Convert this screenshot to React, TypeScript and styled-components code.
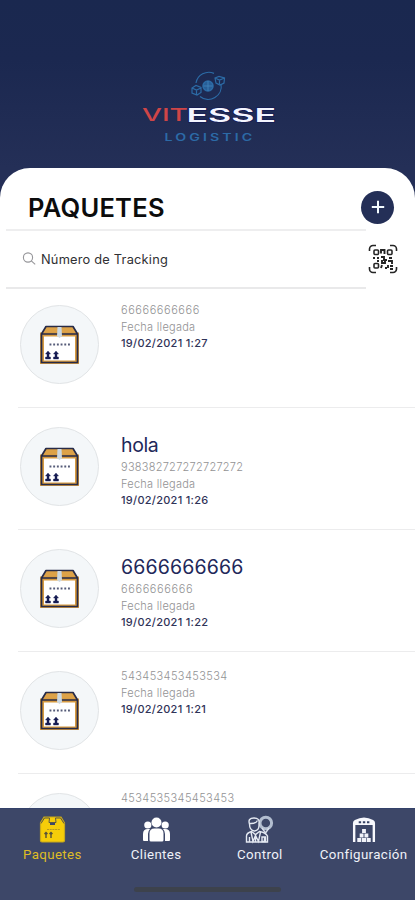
import React from "react";
import styled, { createGlobalStyle } from "styled-components";

const GlobalStyle = createGlobalStyle`
  *, *::before, *::after { box-sizing: border-box; }
  body { margin: 0; background: #232f57; font-family: Inter, "Liberation Sans", sans-serif; }
`;

const Screen = styled.div`
  width: 415px;
  height: 900px;
  display: flex;
  flex-direction: column;
  overflow: hidden;
  background: linear-gradient(#1a284f 0, #1b2850 60px, #242f57 168px, #242f57 100%);
`;

const Brand = styled.header`
  flex: 0 0 168px;
  display: flex;
  justify-content: center;
  align-items: flex-start;
  padding-top: 66px;
`;

const Sheet = styled.main`
  flex: 1 1 0;
  min-height: 0;
  display: flex;
  flex-direction: column;
  overflow: hidden;
  background: #fff;
  border-radius: 30px 30px 0 0;
`;

const TitleBar = styled.div`
  flex: 0 0 61px;
  display: flex;
  align-items: center;
  justify-content: space-between;
  padding: 17px 21px 0 28px;
`;

const Title = styled.h1`
  margin: 1px 0 0;
  font-size: 25.5px;
  line-height: 32px;
  font-weight: 600;
  letter-spacing: 0.25px;
  color: #0c0c0c;
`;

const AddButton = styled.button`
  width: 33px;
  height: 33px;
  margin-top: 0;
  padding: 0;
  display: grid;
  place-items: center;
  border: 0;
  border-radius: 50%;
  background: #242f57;
`;

const SearchBar = styled.div`
  flex: 0 0 60px;
  display: flex;
  align-items: center;
  padding-left: 6px;
`;

const SearchField = styled.label`
  width: 360px;
  height: 60px;
  display: flex;
  align-items: center;
  gap: 5px;
  padding-left: 16px;
  border-top: 2px solid #eeeeef;
  border-bottom: 2px solid #e9e9ea;
  font-size: 12.8px;
  letter-spacing: 0.22px;
  color: #303033;
`;

const ScanButton = styled.button`
  width: 30px;
  height: 30px;
  margin-left: 2px;
  padding: 0;
  border: 0;
  background: none;
`;

const List = styled.ul`
  flex: 1 1 0;
  min-height: 0;
  margin: -3px 0 0;
  padding: 0;
  overflow: hidden;
  list-style: none;
`;

const Row = styled.li`
  height: 122px;
  display: flex;
  gap: 22px;
  padding: 0 0 0 20px;
`;

const Avatar = styled.div`
  flex: 0 0 79px;
  height: 79px;
  margin-top: 19px;
  display: grid;
  place-items: center;
  border: 1px solid #e1e4e6;
  border-radius: 50%;
  background: #f4f7f9;
`;

const Details = styled.div<{ $titled: boolean }>`
  padding-top: ${(p) => (p.$titled ? 25 : 16)}px;
`;

const Name = styled.h2<{ $spacing?: number }>`
  margin: 0 0 1px;
  font-size: 19.5px;
  line-height: 25px;
  font-weight: 400;
  letter-spacing: ${(p) => p.$spacing ?? 0.05}px;
  color: #22285a;
`;

const Muted = styled.div<{ $spacing?: number }>`
  font-size: 11px;
  line-height: 16.5px;
  font-weight: 300;
  letter-spacing: ${(p) => p.$spacing ?? 0.26}px;
  color: #929294;
`;

const Arrival = styled.div`
  font-size: 11px;
  line-height: 16px;
  font-weight: 500;
  letter-spacing: 0.28px;
  color: #303358;
`;

const Divider = styled.li`
  height: 1px;
  margin: -1px 0 0 18px;
  background: #ececed;
`;

const TabBar = styled.nav`
  flex: 0 0 91px;
  display: grid;
  grid-template-columns: repeat(4, 1fr);
  grid-template-rows: 76px 15px;
  border-top: 1px solid #34426a;
  background: #3d4768;
`;

const Tab = styled.a<{ $active?: boolean }>`
  display: flex;
  flex-direction: column;
  align-items: center;
  padding-top: 4px;
  padding-left: 1px;
  font-family: Roboto, sans-serif;
  font-size: 13.3px;
  line-height: 19px;
  letter-spacing: 0.36px;
  white-space: nowrap;
  color: ${(p) => (p.$active ? "#dfbd25" : "#eff2f8")};
`;

const TabIcon = styled.span`
  height: 32px;
  display: grid;
  place-items: center;
`;

const HomeIndicator = styled.div`
  grid-column: 1 / -1;
  justify-self: center;
  width: 147px;
  height: 5px;
  margin-top: 2px;
  border-radius: 3px;
  background: #3d424c;
`;

function Logo() {
  return (
    <svg width="140" height="80" viewBox="138 66 140 80" role="img" aria-label="Vitesse Logistic">
      <g fill="none" stroke="#2c6ba6" strokeWidth="1.2">
        <path d="M196 83a13 13 0 0 1 18-9.600M221 84a13 13 0 0 1-21 12.500" />
        <circle cx="208" cy="86" r="5" fill="#285e97" strokeWidth="1.500" />
        <path d="M203.500 86h9M208 81v10" stroke="#4187bd" strokeWidth=".8" />
        <path d="m192 88 4-2.500 5 2v5l-4 2.500-5-2zM192 88l4.500 2 4.500-2M196.500 90v5" />
        <path d="m215 78 4-1.500 5.500 1.500-.5 5-4 2-4-2zM215 78l4.500 2 5-2M219.500 80v4" />
      </g>
      <g fontFamily="Inter, sans-serif">
        <text x="142" y="120.500" fontSize="17" fontWeight="500" fill="#cf4547" textLength="46" lengthAdjust="spacingAndGlyphs">VIT</text>
        <text x="186.500" y="121.500" fontSize="18.500" fontWeight="600" fill="#f3f5ff" stroke="#101555" strokeWidth="1" paintOrder="stroke" textLength="89.500" lengthAdjust="spacingAndGlyphs">ESSE</text>
        <text x="0" y="0" transform="translate(164.500 141) scale(1.45 1)" fontSize="9.800" fontWeight="600" fill="#2c6aa6" textLength="60.500" lengthAdjust="spacing">LOGISTIC</text>
      </g>
    </svg>
  );
}

function BoxIcon() {
  return (
    <svg width="39" height="39" viewBox="0 0 39 39">
      <path d="M6 1.500h27l4.500 7.500H1.500z" fill="#dda248" />
      <path d="M2 9.500h35v28H2z" fill="#fff" stroke="#d69a40" strokeWidth="4" />
      <path d="M1.500 9 6 1.500h27L37.500 9v28.500h-36zM2 9h35" fill="none" stroke="#272b48" strokeWidth="1.700" strokeLinejoin="round" />
      <path d="M17.500 2h4l.5 9-2.500 2-2.500-2z" fill="#ccd8e1" />
      <path d="M9.500 19.500h21" stroke="#555b78" strokeWidth="2" strokeDasharray="1.900 1.800" />
      <path d="m8 26-2.500 3H7v3H5.500v2h5v-2H9v-3h1.500zM16 26l-2.500 3H15v3h-1.500v2h5v-2H17v-3h1.500z" fill="#171d53" stroke="#171d53" strokeWidth=".4" />
    </svg>
  );
}

function QrIcon() {
  return (
    <svg width="30" height="30" viewBox="0 0 30 30" fill="none" stroke="#252525" strokeWidth="1.600">
      <path d="M1.500 7V5a3.500 3.500 0 0 1 3.500-3.500h3M22 1.500h3A3.500 3.500 0 0 1 28.500 5v2M1.500 23v2A3.500 3.500 0 0 0 5 28.500h3M22 28.500h3a3.500 3.500 0 0 0 3.500-3.500v-2" />
      <rect x="6" y="6" width="4.500" height="4.500" rx="1" />
      <rect x="19.500" y="6" width="4.500" height="4.500" rx="1" />
      <rect x="6" y="19.500" width="4.500" height="4.500" rx="1" />
      <path d="M13 9.500V6h3.500v4M5 14h2m2 0h2m2-1h3v3h3m2-2h3M9 17h2m3-1v3h3v-3m3 1h4v3M14 21l-1 3m4 0h2m1-3v3m2 1h3m-3-3h3" strokeWidth="1.900" />
    </svg>
  );
}

function PackageTabIcon() {
  return (
    <svg width="27" height="27" viewBox="0 0 27 27">
      <path d="M5 1h17l3.500 6v17.500q0 1.500-1.500 1.500H3q-1.500 0-1.500-1.500V7z" fill="#f6cd09" stroke="#c6a81d" strokeWidth="1.200" />
      <path d="M2 7.500 5.500 2h5L10 6.500h7L16.500 2h5L25 7.500" fill="none" stroke="#5d5843" strokeWidth="1" />
      <path d="M11 7h5v2h-5z" fill="#3d4768" />
      <path d="M8 13.500h13" stroke="#b79a1d" strokeWidth="1" strokeDasharray="2 .700" />
      <path d="M7 17v5m5-5v5m-6.500-4L7 16.500 8.500 18m2 0 1.500-1.500 1.500 1.500" fill="none" stroke="#575239" strokeWidth="1.400" />
    </svg>
  );
}

function ClientsIcon() {
  return (
    <svg width="29" height="27" viewBox="0 0 29 27" fill="#fff">
      <circle cx="14.500" cy="6.500" r="5" />
      <circle cx="5.800" cy="9" r="3.600" />
      <circle cx="23.200" cy="9" r="3.600" />
      <path d="M1 24v-6q0-5 5-5h2q-2 2-2 5v7H2q-1 0-1-1M28 24v-6q0-5-5-5h-2q2 2 2 5v7h4q1 0 1-1" />
      <path d="M7.500 24v-6.500q0-5 5-5h4q5 0 5 5V24q0 1.500-1.500 1.500H9Q7.500 25.500 7.500 24" />
    </svg>
  );
}

function ControlIcon() {
  return (
    <svg width="29" height="29" viewBox="0 0 29 29" fill="none" stroke="#e4e9f2" strokeWidth="1.400">
      <circle cx="20.800" cy="8" r="5.800" stroke="#b3bed0" strokeWidth="3" />
      <path d="M17 13 20.500 18 24 13" stroke="#d7deea" />
      <path d="M4.500 9q-2-6 4.500-6 6 0 5 5.500v2q0 5-4.500 5.500-5-.5-5-7M4.500 8.500q6 .5 8-3" fill="#3d4768" />
      <path d="M1.500 27v-6q0-3 5-4.500l4 3 4-3q6 1 8 4.500v6zM6 17l2 9.500 2.500-6 3 6L15.500 17M4.500 22v5m15-5v5m-9-7.500v7" />
      <path d="M17 22h3.500v4.500H17z" />
    </svg>
  );
}

function WarehouseIcon() {
  return (
    <svg width="24" height="27" viewBox="0 0 25 27" preserveAspectRatio="none">
      <path d="M1 26V7q0-2 2-3 9.500-5 19 0 2 1 2 3v19h-2.500V9h-18v17z" fill="#f7f8fd" />
      <path d="M7 5.200h2.500v2H7zm4.300 0h2.500v2h-2.500zm4.300 0h2.500v2h-2.500z" fill="#354164" />
      <path d="M10.500 13h4v4h-4zM8 17.500h4v4H8zm5 0h4v4h-4zM5.500 22h4.200v4H5.500zm4.900 0h4.200v4h-4.200zm4.900 0h4.200v4h-4.200z" fill="#f0f2f8" />
    </svg>
  );
}

type Parcel = { name?: string; nameSpacing?: number; code: string; arrival?: string; spacing?: number };

const parcels: Parcel[] = [
  { code: "66666666666", arrival: "19/02/2021 1:27", spacing: 0.55 },
  { name: "hola", nameSpacing: -0.4, code: "938382727272727272", arrival: "19/02/2021 1:26" },
  { name: "6666666666", nameSpacing: 0.15, code: "6666666666", arrival: "19/02/2021 1:22", spacing: 0.6 },
  { code: "543453453453534", arrival: "19/02/2021 1:21", spacing: 0.4 },
  { code: "4534535345453453", spacing: 0.4 },
];

const tabs = [
  { label: "Paquetes", icon: <PackageTabIcon />, active: true },
  { label: "Clientes", icon: <ClientsIcon /> },
  { label: "Control", icon: <ControlIcon /> },
  { label: "Configuración", icon: <WarehouseIcon /> },
];

export default function App() {
  return (
    <Screen>
      <GlobalStyle />
      <Brand><Logo /></Brand>
      <Sheet>
        <TitleBar>
          <Title>PAQUETES</Title>
          <AddButton aria-label="Agregar">
            <svg width="14" height="14" viewBox="0 0 14 14" stroke="#f3fbff" strokeWidth="2">
              <path d="M7 .8v12.400M.8 7h12.400" />
            </svg>
          </AddButton>
        </TitleBar>
        <SearchBar>
          <SearchField>
            <svg width="14" height="14" viewBox="0 0 14 14" fill="none" stroke="#96969a" strokeWidth="1.100">
              <circle cx="6" cy="5.500" r="4.600" />
              <path d="m9.300 8.800 3.900 3.500" />
            </svg>
            <span>Número de Tracking</span>
          </SearchField>
          <ScanButton aria-label="Escanear"><QrIcon /></ScanButton>
        </SearchBar>
        <List>
          {parcels.map((p) => (
            <React.Fragment key={p.code}>
              <Row>
                <Avatar><BoxIcon /></Avatar>
                <Details $titled={!!p.name}>
                  {p.name && <Name $spacing={p.nameSpacing}>{p.name}</Name>}
                  <Muted $spacing={p.spacing}>{p.code}</Muted>
                  {p.arrival && (
                    <>
                      <Muted>Fecha llegada</Muted>
                      <Arrival>{p.arrival}</Arrival>
                    </>
                  )}
                </Details>
              </Row>
              <Divider aria-hidden />
            </React.Fragment>
          ))}
        </List>
      </Sheet>
      <TabBar>
        {tabs.map((t) => (
          <Tab key={t.label} $active={t.active}>
            <TabIcon>{t.icon}</TabIcon>
            {t.label}
          </Tab>
        ))}
        <HomeIndicator />
      </TabBar>
    </Screen>
  );
}
